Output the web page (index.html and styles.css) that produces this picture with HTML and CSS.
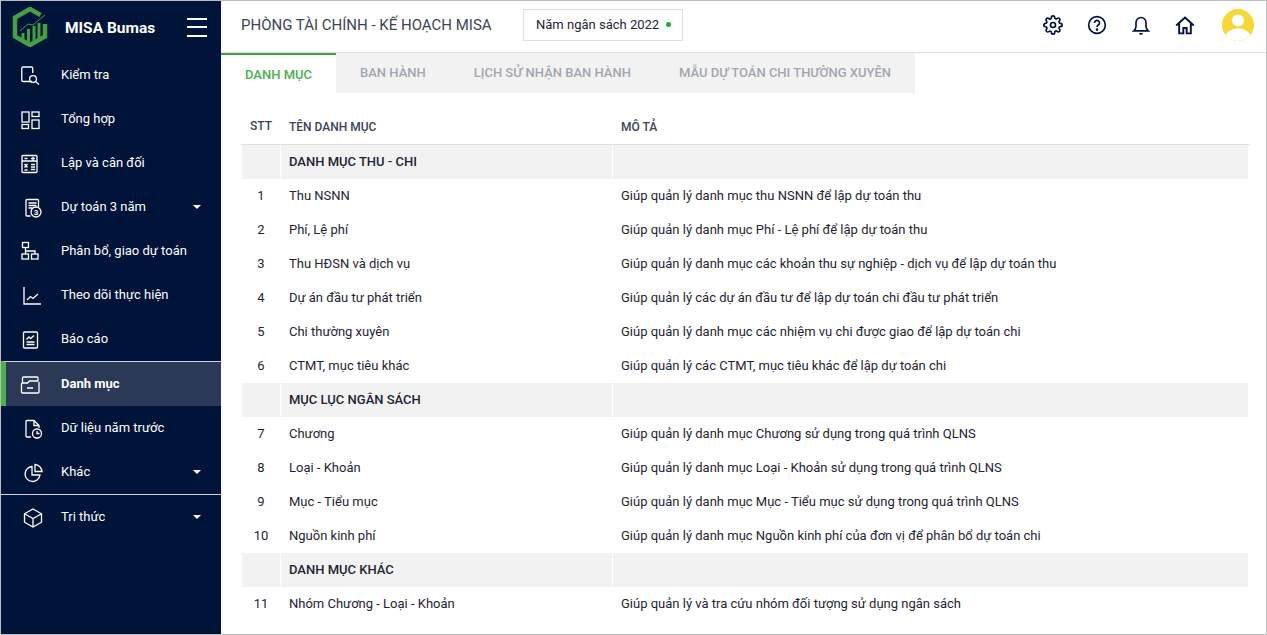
FILE: index.html
```html
<!DOCTYPE html>
<html lang="vi">
<head>
<meta charset="utf-8">
<title>MISA Bumas</title>
<link rel="stylesheet" href="styles.css">
</head>
<body>
<div class="app">
  <aside class="sidebar">
    <div class="brand">
      <svg class="logo" viewBox="0 0 36 40" width="36" height="40">
        <path d="M33 17V29.500L18 38L3 29.500V10.500L18 2L28.500 8" fill="none" stroke="#43a047" stroke-width="4.500"/>
        <path d="M11 33V26M16.500 35V22M22 35V19M27 32V16" stroke="#43a047" stroke-width="3"/>
        <path d="M8 24L16 17L21 18L33 8" fill="none" stroke="#43a047" stroke-width="1"/>
      </svg>
      <span class="brand-name">MISA Bumas</span>
      <span class="burger"><i></i><i></i><i></i></span>
    </div>
    <nav class="menu">
      <a class="item"><svg class="ic" viewBox="0 0 20 20"><path d="M12 15.500H3a1.200 1.200 0 0 1-1.200-1.200V2.200A1.200 1.200 0 0 1 3 1h8.500a1.200 1.200 0 0 1 1.200 1.200V7"/><circle cx="13" cy="13" r="3.400"/><path d="M15.500 15.500L19 18.500"/></svg><span>Kiểm tra</span></a>
      <a class="item"><svg class="ic" viewBox="0 0 20 20"><rect x="2" y="2" width="7" height="10"/><rect x="12" y="2" width="7" height="4.500"/><rect x="2" y="14.500" width="6.500" height="4"/><rect x="12" y="10" width="7" height="8.500"/></svg><span>Tổng hợp</span></a>
      <a class="item"><svg class="ic" viewBox="0 0 20 20"><rect x="2" y="1.500" width="15" height="17" rx="1"/><path d="M2 7h15M4.500 4.500h3M11 4.500h4M13 2.800v3.400M4.500 10l3 3.500M7.500 10l-3 3.500M11 10.500h4M11 13h4M11 15.500h4M4.500 16h3"/></svg><span>Lập và cân đối</span></a>
      <a class="item has-sub"><svg class="ic" viewBox="-2.500 0 20 20"><path d="M8 18H4.500a1 1 0 0 1-1-1V2.500a1 1 0 0 1 1-1H15a1 1 0 0 1 1 1V9"/><path d="M6 5h8M6 7.500h8M6 10h4"/><circle cx="13.500" cy="14" r="5"/><text x="13.500" y="17" class="ic-num">3</text></svg><span>Dự toán 3 năm</span><b class="caret"></b></a>
      <a class="item"><svg class="ic" viewBox="0 1 20 20"><rect x="2.500" y="1.500" width="6" height="5"/><rect x="2" y="13" width="6.500" height="5"/><rect x="11.500" y="13" width="6.500" height="5"/><path d="M5.500 6.500V13M5.500 10H15V13"/></svg><span>Phân bổ, giao dự toán</span></a>
      <a class="item"><svg class="ic" viewBox="-2 0 20 20"><path d="M2 1v17h17"/><path d="M5 14l3.500-3.500 2.500 2 5-4.500"/></svg><span>Theo dõi thực hiện</span></a>
      <a class="item"><svg class="ic" viewBox="-.5 0 20 20"><rect x="3" y="2" width="14" height="16" rx="1"/><path d="M6 9.500l2.500-2.500 1.500 1.500 3.500-3M6 12h8M6 14.500h8"/></svg><span>Báo cáo</span></a>
      <a class="item active"><svg class="ic" viewBox="0 0 20 20"><path d="M2.500 8V3a1 1 0 0 1 1-1H17a1 1 0 0 1 1 1v3H9.500L7.500 8H2.500a1 1 0 0 0-1 1v8a1 1 0 0 0 1 1H18a1 1 0 0 0 1-1V7M7 13h6"/></svg><span>Danh mục</span></a>
      <a class="item"><svg class="ic" viewBox="-3 0 20 20"><path d="M8 18H4a1 1 0 0 1-1-1V2.500a1 1 0 0 1 1-1h7l5 5V9"/><path d="M11 1.500V6.500h5"/><circle cx="14" cy="14.500" r="4.500"/><path d="M14 12v2.500h2.500"/></svg><span>Dữ liệu năm trước</span></a>
      <a class="item has-sub"><svg class="ic" viewBox="-3.500 0 20 20"><path d="M8.500 3.500a7.500 7.500 0 1 0 8 8.500H8.500z"/><path d="M11.500 1.500a7.500 7.500 0 0 1 7 7h-7z"/></svg><span>Khác</span><b class="caret"></b></a>
      <a class="item has-sub extra"><svg class="ic" viewBox="-3 0 20 20"><path d="M10 1l8.500 4.800v8.400L10 19l-8.500-4.800V5.800z"/><path d="M1.500 5.800l8.500 4.700 8.500-4.700M10 10.500V19"/></svg><span>Tri thức</span><b class="caret"></b></a>
    </nav>
  </aside>
  <main class="main">
    <header class="topbar">
      <h1 class="org">PHÒNG TÀI CHÍNH - KẾ HOẠCH MISA</h1>
      <div class="year">Năm ngân sách 2022<i class="dot"></i></div>
      <div class="actions">
        <svg class="tool" viewBox="0 0 24 24"><circle cx="12" cy="12" r="3"/><path d="M19.400 15a1.650 1.650 0 0 0 .33 1.820l.06.06a2 2 0 0 1 0 2.830 2 2 0 0 1-2.830 0l-.06-.06a1.650 1.650 0 0 0-1.820-.33 1.650 1.650 0 0 0-1 1.510V21a2 2 0 0 1-2 2 2 2 0 0 1-2-2v-.09A1.650 1.650 0 0 0 9 19.400a1.650 1.650 0 0 0-1.820.33l-.06.06a2 2 0 0 1-2.830 0 2 2 0 0 1 0-2.830l.06-.06a1.650 1.650 0 0 0 .33-1.820 1.650 1.650 0 0 0-1.510-1H3a2 2 0 0 1-2-2 2 2 0 0 1 2-2h.09A1.650 1.650 0 0 0 4.600 9a1.650 1.650 0 0 0-.33-1.820l-.06-.06a2 2 0 0 1 0-2.830 2 2 0 0 1 2.830 0l.06.06a1.650 1.650 0 0 0 1.820.33H9a1.650 1.650 0 0 0 1-1.510V3a2 2 0 0 1 2-2 2 2 0 0 1 2 2v.09a1.650 1.650 0 0 0 1 1.510 1.650 1.650 0 0 0 1.820-.33l.06-.06a2 2 0 0 1 2.830 0 2 2 0 0 1 0 2.830l-.06.06a1.650 1.650 0 0 0-.33 1.820V9a1.650 1.650 0 0 0 1.510 1H21a2 2 0 0 1 2 2 2 2 0 0 1-2 2h-.09a1.650 1.650 0 0 0-1.510 1z"/></svg>
        <svg class="tool" viewBox="0 0 24 24"><circle cx="12" cy="12" r="10"/><path d="M9 9.500a3 3 0 1 1 4.500 2.600c-1 .6-1.500 1.200-1.500 2.400"/><circle class="solid" cx="12" cy="17.500" r=".6"/></svg>
        <svg class="tool" viewBox="0 0 24 24"><path d="M3.500 19c1.800-1.500 2.500-3 2.500-5.500V9a6 6 0 0 1 12 0v4.500c0 2.500.7 4 2.500 5.500z"/><path d="M10 22.500h4"/></svg>
        <svg class="tool" viewBox="0 0 24 24"><path class="roof" d="M1.500 12.500L12 3l10.500 9.500M5 10v12h5v-6.500h4V22h5V10"/></svg>
        <span class="avatar"><svg viewBox="0 0 32 32" width="32" height="32"><circle cx="16" cy="11.500" r="6" fill="#fff"/><path d="M3.500 26c3-5 7.500-6.500 12.500-6.500s9.500 1.500 12.500 6.500a16 16 0 0 1-25 0z" fill="#fff"/></svg></span>
      </div>
    </header>
    <div class="tabs">
      <a class="tab on">DANH MỤC</a>
      <a class="tab">BAN HÀNH</a>
      <a class="tab">LỊCH SỬ NHẬN BAN HÀNH</a>
      <a class="tab">MẪU DỰ TOÁN CHI THƯỜNG XUYÊN</a>
    </div>
    <table class="grid">
      <thead><tr><th class="c1">STT</th><th class="c2">TÊN DANH MỤC</th><th>MÔ TẢ</th></tr></thead>
      <tbody>
        <tr class="grp"><td></td><td>DANH MỤC THU - CHI</td><td></td></tr>
        <tr><td class="c1">1</td><td>Thu NSNN</td><td>Giúp quản lý danh mục thu NSNN để lập dự toán thu</td></tr>
        <tr><td class="c1">2</td><td>Phí, Lệ phí</td><td>Giúp quản lý danh mục Phí - Lệ phí để lập dự toán thu</td></tr>
        <tr><td class="c1">3</td><td>Thu HĐSN và dịch vụ</td><td>Giúp quản lý danh mục các khoản thu sự nghiệp - dịch vụ để lập dự toán thu</td></tr>
        <tr><td class="c1">4</td><td>Dự án đầu tư phát triển</td><td>Giúp quản lý các dự án đầu tư để lập dự toán chi đầu tư phát triển</td></tr>
        <tr><td class="c1">5</td><td>Chi thường xuyên</td><td>Giúp quản lý danh mục các nhiệm vụ chi được giao để lập dự toán chi</td></tr>
        <tr><td class="c1">6</td><td>CTMT, mục tiêu khác</td><td>Giúp quản lý các CTMT, mục tiêu khác để lập dự toán chi</td></tr>
        <tr class="grp"><td></td><td>MỤC LỤC NGÂN SÁCH</td><td></td></tr>
        <tr><td class="c1">7</td><td>Chương</td><td>Giúp quản lý danh mục Chương sử dụng trong quá trình QLNS</td></tr>
        <tr><td class="c1">8</td><td>Loại - Khoản</td><td>Giúp quản lý danh mục Loại - Khoản sử dụng trong quá trình QLNS</td></tr>
        <tr><td class="c1">9</td><td>Mục - Tiểu mục</td><td>Giúp quản lý danh mục Mục - Tiểu mục sử dụng trong quá trình QLNS</td></tr>
        <tr><td class="c1">10</td><td>Nguồn kinh phí</td><td>Giúp quản lý danh mục Nguồn kinh phí của đơn vị để phân bổ dự toán chi</td></tr>
        <tr class="grp"><td></td><td>DANH MỤC KHÁC</td><td></td></tr>
        <tr><td class="c1">11</td><td>Nhóm Chương - Loại - Khoản</td><td>Giúp quản lý và tra cứu nhóm đối tượng sử dụng ngân sách</td></tr>
      </tbody>
    </table>
  </main>
</div>
</body>
</html>
```
FILE: styles.css
```css
* { box-sizing: border-box; }
html, body { margin: 0; height: 100%; overflow: hidden; }
body { font-family: Roboto, "Noto Sans", sans-serif; font-size: 13px; color: #1f2433; background: #fff; }
.app { display: flex; height: 635px; border: 1px solid #bdbdbd; }
.sidebar { width: 220px; flex: none; background: #001339; color: #fff; }
.brand { height: 52px; display: flex; align-items: center; padding-left: 11px; }
.logo { flex: none; }
.brand-name { margin-left: 17px; font-size: 15.500px; font-weight: 700; width: 122px; margin-top: 2px; }
.burger { display: flex; flex-direction: column; gap: 6.500px; width: 20px; }
.burger i { display: block; height: 2px; background: #fff; }
.menu { display: flex; flex-direction: column; }
.item { height: 44px; display: flex; align-items: center; padding-left: 19px; position: relative; color: #fff; }
.item span { margin-left: 21px; margin-bottom: 2px; }
.ic { width: 20px; height: 20px; fill: none; stroke: #fff; stroke-width: 1.300; flex: none; overflow: visible; margin-top: 2px; }
.ic-num { font-size: 8px; fill: #fff; stroke: none; text-anchor: middle; font-weight: 700; }
.caret { position: absolute; right: 20px; top: 20px; border: 4px solid transparent; border-top-color: #fff; border-bottom: 0; }
.active { height: 45px; background: #2b3856; border-top: 1px solid #d0d3da; border-left: 5px solid #4caf50; padding-left: 14px; font-weight: 700; }
.extra { height: 45px; border-top: 1px solid #d0d3da; }
.main { flex: 1; min-width: 0; }
.topbar { height: 52px; display: flex; align-items: center; padding: 0 0 3px 20px; border-bottom: 1px solid #e0e0e0; }
.org { margin: 0; font-size: 15px; font-weight: 400; color: #3d4356; width: 282px; }
.year { height: 32px; width: 160px; display: flex; align-items: center; padding: 0 0 1px 12px; border: 1px solid #e0e0e0; font-size: 13px; }
.dot { width: 5px; height: 5px; border-radius: 50%; background: #1faa2e; margin-left: 7px; }
.actions { margin-left: auto; display: flex; align-items: center; padding-right: 12px; }
.tool { width: 20px; height: 20px; fill: none; stroke: #001339; stroke-width: 2; margin-right: 24px; }
.tool:nth-child(4) { margin-right: 27px; }
.tool .solid { fill: #001339; }
.tool .roof { stroke-width: 2.300; }
.avatar { width: 32px; height: 32px; border-radius: 50%; background: #f7d736; overflow: hidden; display: block; }
.avatar svg { display: block; }
.tabs { display: flex; height: 40px; background: #f2f2f2; width: 694px; font-size: 13px; font-weight: 500; color: #a3a6b0; }
.tab { padding: 12px 24px 0; white-space: nowrap; }
.tab.on { background: #fff; color: #4caf50; border-top: 2px solid #43a047; padding-top: 12px; }
.grid { margin: 16px 0 0 20px; width: 1008px; border-collapse: separate; border-spacing: 0; table-layout: fixed; }
.grid th { height: 36px; font-size: 12px; font-weight: 500; text-align: left; padding: 0 8px; border-bottom: 1px solid #e0e0e0; color: #3d4356; }
.grid th:first-child { width: 40px; }
.grid th:nth-child(2) { width: 332px; }
.grid td { height: 34px; padding: 0 8px 2px; }
.grid .c1 { text-align: center; padding: 0 0 2px; }
.grp td { background: #f2f2f2; font-weight: 500; border-right: 1px solid #fff; }
.grp td:first-child { border-left: 1px solid #fff; }
```
